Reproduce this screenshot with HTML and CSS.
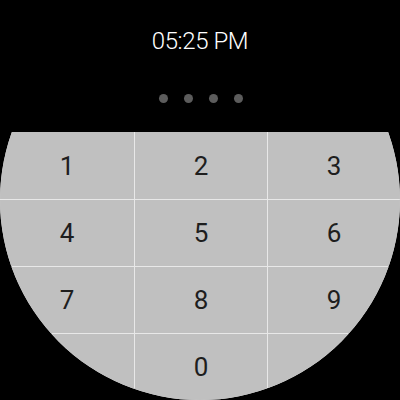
FILE: index.html
```html
<!DOCTYPE html>
<html lang="en">
<head>
  <meta charset="UTF-8">
  <meta name="viewport" content="width=device-width, initial-scale=1.0">
  <title>PIN Lock</title>
  <link rel="stylesheet" href="styles.css">
</head>
<body>
  <div class="watch-face">
    <header class="lock-header">
      <div class="lock-time">05:25 PM</div>
      <div class="pin-dots">
        <span class="pin-dot"></span>
        <span class="pin-dot"></span>
        <span class="pin-dot"></span>
        <span class="pin-dot"></span>
      </div>
    </header>

    <main class="keypad">
      <button type="button" class="key">1</button>
      <button type="button" class="key">2</button>
      <button type="button" class="key">3</button>
      <button type="button" class="key">4</button>
      <button type="button" class="key">5</button>
      <button type="button" class="key">6</button>
      <button type="button" class="key">7</button>
      <button type="button" class="key">8</button>
      <button type="button" class="key">9</button>
      <div class="key key-empty"></div>
      <button type="button" class="key">0</button>
      <div class="key key-empty"></div>
    </main>
  </div>
</body>
</html>
```

FILE: styles.css
```css
/* Round watch screen, dark theme */
:root {
  --color-bg: #000000;
  --color-text-light: #ffffff;
  --color-dot: #5c5c5c;
  --color-key: #c0c0c0;
  --color-key-text: #1e1e1e;
  --color-divider: #e8e8e8;

  --font-primary: Roboto, "Noto Sans", "Liberation Sans", sans-serif;
}

* {
  box-sizing: border-box;
  margin: 0;
  padding: 0;
}

body {
  font-family: var(--font-primary);
  background-color: var(--color-bg);
  width: 400px;
  height: 400px;
  overflow: hidden;
}

/* Circular clip of the screen */
.watch-face {
  width: 400px;
  height: 400px;
  border-radius: 50%;
  overflow: hidden;
  display: flex;
  flex-direction: column;
  background-color: var(--color-bg);
}

/* Time + entered digits */
.lock-header {
  height: 132px;
  flex-shrink: 0;
  display: flex;
  flex-direction: column;
  align-items: center;
  padding-top: 27px;
}

.lock-time {
  color: var(--color-text-light);
  font-size: 24px;
  font-weight: 300;
  line-height: 28px;
  letter-spacing: -0.4px;
}

.pin-dots {
  display: flex;
  gap: 16px;
  margin-top: 39px;
  padding-left: 1px;
}

.pin-dot {
  width: 9px;
  height: 9px;
  border-radius: 50%;
  background-color: var(--color-dot);
}

/* Number pad */
.keypad {
  flex: 1;
  display: grid;
  grid-template-columns: 134px 1fr 1fr;
  grid-template-rows: 67px 66px 66px 1fr;
  gap: 1px;
  background-color: var(--color-divider);
}

.key {
  background-color: var(--color-key);
  border: none;
  color: var(--color-key-text);
  font-family: var(--font-primary);
  font-size: 26px;
  font-weight: 400;
  display: flex;
  align-items: center;
  justify-content: center;
  cursor: pointer;
}
```
